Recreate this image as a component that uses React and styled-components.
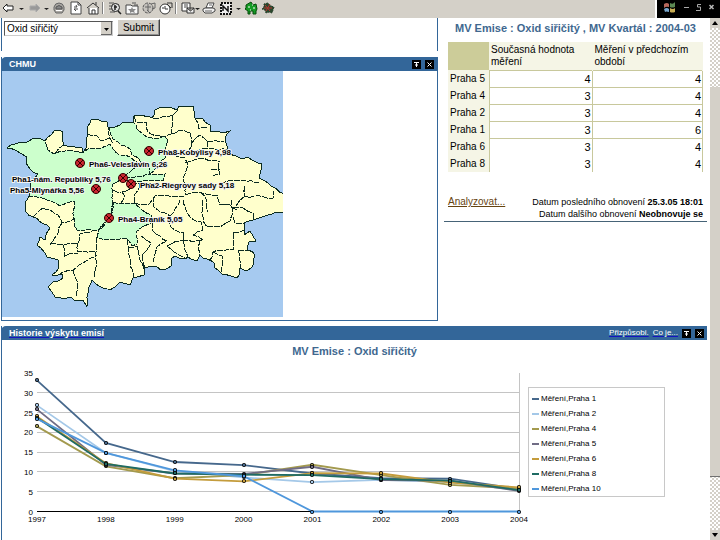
import React from "react";
import styled, { createGlobalStyle } from "styled-components";

const BLUE = "#336699";
const INK = "#0a2a20";

const GlobalStyle = createGlobalStyle`
  * { box-sizing: border-box; }
  html, body { margin: 0; padding: 0; background: #fff; }
  body { font-family: "Liberation Sans", Arial, sans-serif; font-size: 10px; color: #000; overflow: hidden; }
  button { font: inherit; }
`;

const Page = styled.div`
  display: flex;
  flex-direction: column;
  height: 100vh;
`;

const Toolbar = styled.header`
  display: flex;
  flex: none;
  height: 18px;
  background: #d4d0c8;
`;

const Tools = styled.nav`
  display: flex;
  flex: 1;
  align-items: center;
  gap: 1px;
  padding: 0 0 2px 1px;
`;

const ToolButton = styled.button`
  display: flex;
  flex: none;
  padding: 0;
  border: 0;
  background: none;
`;

const Separator = styled.span`
  width: 4px;
  height: 12px;
  border-left: 1px solid #808080;
  box-shadow: inset 1px 0 #fff;
  background: #d4d0c8;
`;

const WindowControls = styled.div`
  display: flex;
  align-items: center;
  justify-content: space-between;
  width: 63px;
  padding: 0 5px 4px 5px;
  background: #000;
  box-shadow: -2px 0 #fff;
`;

const Body = styled.div`
  display: flex;
  flex: 1;
  min-height: 0;
`;

const Main = styled.main`
  display: flex;
  flex: 1;
  flex-direction: column;
  gap: 5px;
  min-width: 0;
  padding: 0 3px 0 1px;
  overflow: hidden;
`;

const Columns = styled.div`
  display: grid;
  grid-template-columns: 437fr 263fr;
  gap: 6px;
  align-items: start;
`;

const Stack = styled.div`
  display: flex;
  flex-direction: column;
  gap: 6px;
`;

const FilterForm = styled.form`
  display: flex;
  gap: 4px;
  height: 33px;
  padding: 1px 2px;
  border: 1px solid ${BLUE};
  border-width: 0 1px;
`;

const Select = styled.select`
  appearance: none;
  width: 109px;
  height: 15px;
  margin-top: 2px;
  padding: 0 2px;
  border: 1px solid;
  border-color: #555 #ccc #ccc #555;
  border-radius: 0;
  background: #fff;
  font: 10px "Liberation Sans", Arial, sans-serif;
  line-height: 12px;
  color: #000;
`;

const SelectWrap = styled.label`
  position: relative;
  height: 17px;
  svg { position: absolute; right: 1px; top: 3px; pointer-events: none; }
`;

const Submit = styled.button`
  width: 43px;
  height: 17px;
  padding: 0;
  border: 1px solid;
  border-color: #fff #404040 #404040 #fff;
  box-shadow: inset -1px -1px #909090;
  background: #d4d0c8;
  font-size: 10px;
  line-height: 12px;
`;

const Panel = styled.section`
  display: flex;
  flex-direction: column;
  flex: ${(p) => (p.$grow ? 1 : "none")};
  border: 0 solid ${BLUE};
  border-width: ${(p) => (p.$grow ? "0 0 0 1px" : "0 1px 1px 1px")};
`;

const PanelHeader = styled.div`
  display: flex;
  align-items: center;
  gap: 4px;
  height: 14px;
  margin-left: -1px;
  padding: 0 3px 0 8px;
  border-top-left-radius: 5px;
  background: ${BLUE};
  color: #fff;
`;

const PanelTitle = styled.h2`
  flex: 1;
  margin: 0;
  font-size: 9px;
  line-height: 12px;
  a { color: #fff; text-decoration-color: #1414c0; }
`;

const HeaderLink = styled.a`
  font-size: 8px;
  line-height: 12px;
  color: #fff;
  text-decoration-color: #1414c0;
`;

const HeaderButton = styled.button`
  display: flex;
  width: 9px;
  height: 9px;
  margin: 0;
  padding: 0;
  border: 0;
  background: #000;
`;

const MapBody = styled.div`
  padding-bottom: 3px;
  svg { display: block; }
`;

const MapLabel = styled.text`
  font: bold 8px "Liberation Sans", Arial, sans-serif;
  fill: #000;
  stroke: #f4f4f4;
  stroke-width: 2px;
  stroke-linejoin: round;
  paint-order: stroke;
`;

const Summary = styled.section`
  padding: 3px 4px 1px;
  border-bottom: 1px solid #466377;
`;

const ChartTitle = styled.h3`
  margin: 0;
  font-size: 11px;
  line-height: 14px;
  text-align: center;
  color: #40688f;
`;

const DataTable = styled.table`
  width: 255px;
  margin-top: 7px;
  border-collapse: collapse;
  font-size: 11px;
  th { font-weight: normal; font-size: 10px; text-align: left; background: #f5f5e6; padding: 0 2px; }
  thead th { height: 28px; line-height: 12px; border-right: 1px solid #f5f5e6; vertical-align: middle; }
  thead th:first-child { width: 41px; background: #cccc99; border-right: 0; }
  thead th:nth-child(2) { width: 103px; }
  tbody tr { height: 17px; }
  tbody th { line-height: 12px; white-space: nowrap; }
  td { padding: 0 1px; border: 1px solid #c8c89c; line-height: 12px; text-align: right; }
  tbody tr:last-child td { border-bottom: 0; border-top: 0; }
  tbody tr:nth-last-child(2) td { border-bottom: 0; }
`;

const HeadText = styled.span`
  display: block;
  max-width: 96px;
`;

const Footer = styled.footer`
  display: flex;
  justify-content: space-between;
  margin-top: 24px;
  font-size: 9px;
  line-height: 12px;
  p { margin: 0; text-align: right; white-space: nowrap; }
  a { font-size: 10px; color: #664411; }
`;

const History = styled.div`
  padding-top: 4px;
`;

const ChartRow = styled.div`
  display: flex;
  align-items: flex-start;
  margin-top: 2px;
  svg { display: block; flex: none; }
`;

const AxisText = styled.text`
  font: 8px "Liberation Sans", Arial, sans-serif;
  fill: #000;
`;

const Legend = styled.ul`
  width: 137px;
  margin: 27px 0 0;
  padding: 3px 3px 0;
  border: 1px solid #c8c8c8;
  list-style: none;
`;

const LegendItem = styled.li`
  display: flex;
  align-items: center;
  gap: 2px;
  height: 15px;
  font-size: 8px;
  line-height: 10px;
  &::before { content: ""; width: 7px; height: 2px; background: ${(p) => p.$color}; }
`;

const Scrollbar = styled.div`
  display: flex;
  flex-direction: column;
  flex: none;
  width: 10px;
  background: repeating-conic-gradient(#d4d0c8 0 25%, #fff 0 50%) 0 0 / 4px 4px;
`;

const ScrollButton = styled.button`
  display: flex;
  flex: none;
  align-items: center;
  justify-content: center;
  height: 10px;
  padding: 0;
  border: 0;
  background: #d4d0c8;
`;

const Track = styled.div`
  display: flex;
  flex: 1;
  flex-direction: column;
  padding: 59px 0 53px;
`;

const Thumb = styled.div`
  flex: 1;
  border-bottom: 1px solid #707070;
  background: #d4d0c8;
`;

const ICONS = {
  back: <path d="M2 8 6 4v2h6v4H6v2Z" fill="#fff" stroke="#222" />,
  forward: <path d="M14 8 10 4v2H4v4h6v2Z" fill="#999" stroke="#aaa" />,
  stop: (
    <>
      <path d="M3 10V7q1-4 5-4t5 4v3l-2 3H5Z" fill="#aaa7a2" stroke="#666" />
      <path d="M5 9V7q3-3 6 0v2Z" fill="#888" stroke="#555" />
      <path d="M5 10.500h6" stroke="#fff" />
    </>
  ),
  refresh: (
    <>
      <path d="M3 2h7l3 3v9H3Z" fill="#fff" stroke="#444" />
      <path d="M6 7h3l-1-2M10 9H6l2 2M10 2v3h3" fill="none" stroke="#444" />
    </>
  ),
  home: (
    <>
      <path d="M4 8v6h9V8" fill="#fff" stroke="#333" />
      <path d="m2 8 6-5 6 5M11 5V2M7 14v-4h3v4" fill="none" stroke="#333" />
    </>
  ),
  search: (
    <>
      <path d="M2 3h5M2 6h3M2 9h3M3 12h5" stroke="#555" />
      <circle cx="8.500" cy="7.500" r="4" fill="#ddd" stroke="#222" />
      <path d="m11 11 3 3M7 7h3M8 5v5" stroke="#222" strokeWidth="1.500" />
    </>
  ),
  favorites: (
    <>
      <path d="M2 5h5l1 1h6v8H2Z" fill="#f8f8f8" stroke="#444" />
      <path d="m8 7 1 2h3l-2 2 1 2-3-1-2 1v-2L4 9h3Z" fill="#888" />
      <path d="M8 3h4M10 5h4" stroke="#555" />
    </>
  ),
  media: (
    <>
      <circle cx="7" cy="8" r="5" fill="#c5c2bd" stroke="#555" strokeDasharray="3 1" />
      <path d="M7 4v7M4 7h6M10 4l4-1v5l-3 1M6 10l3 3" fill="none" stroke="#666" />
    </>
  ),
  history: (
    <>
      <circle cx="7" cy="9" r="5" fill="#fff" stroke="#333" />
      <path d="M7 6v3h3M9 3h5v5M9 4l4 4M4 8h2" fill="none" stroke="#333" />
    </>
  ),
  print: (
    <>
      <path d="m5 8 2-5h6l-2 5Z" fill="#fff" stroke="#444" />
      <path d="m2 9 2-1h8l2 1v2l-3 2H4l-2-2Z" fill="#f0f0f0" stroke="#444" />
      <path d="M4 11h7M8 5h3" stroke="#666" />
    </>
  ),
  edit: (
    <>
      <path d="M3 3h10v11H3Z" fill="#eee" stroke="#111" strokeWidth="2" strokeDasharray="2 1" />
      <path d="M5 11V6l5 5V6" fill="none" stroke="#111" strokeWidth="1.500" />
    </>
  ),
  green: (
    <>
      <path d="M8 2 3 5v3L2 9l3 2v3h2v-3h3v3h3v-3l1-2-1-5-3 1Z" fill="#159b25" stroke="#064d0c" />
      <path d="M5 7h2M9 5h1M10 8h2M7 10h1" stroke="#fff" />
    </>
  ),
  red: (
    <>
      <path d="M8 3 4 4v3L2 9l3 1 1 3 3-1 3 1 1-3 1-3-3-1Z" fill="#2a482d" stroke="#263d29" strokeDasharray="2 1" />
      <path d="m5 5 5 6M10 4 6 11M4 8h8" stroke="#b5342f" />
    </>
  ),
};

function Tool({ name, label }) {
  return (
    <ToolButton type="button" aria-label={label}>
      <svg width="16" height="16" viewBox="0 0 16 16">{ICONS[name]}</svg>
    </ToolButton>
  );
}

function MenuArrow() {
  return (
    <ToolButton type="button" aria-label="Nabídka">
      <svg width="7" height="16"><path d="M1 8h5L3.500 10Z" fill="#222" /></svg>
    </ToolButton>
  );
}

function PanelButtons() {
  return (
    <>
      <HeaderButton type="button" aria-label="Sbalit">
        <svg width="9" height="9"><path d="M2 2.500h5M4.500 3v4M3 5h3" stroke="#fff" /></svg>
      </HeaderButton>
      <HeaderButton type="button" aria-label="Zavřít">
        <svg width="9" height="9"><path d="m2.500 2.500 4 4m0-4-4 4" stroke="#fff" /></svg>
      </HeaderButton>
    </>
  );
}

/* Turns a list of coordinates into a path with small irregular kinks, as on a district border. */
function border(coords, close) {
  const pts = coords.split(" ").map((pair) => pair.split(",").map(Number));
  if (close) pts.push(pts[0]);
  let d = `M${pts[0]}`;
  for (let i = 1; i < pts.length; i += 1) {
    const [x1, y1] = pts[i - 1];
    const [x2, y2] = pts[i];
    const dx = x2 - x1;
    const dy = y2 - y1;
    const length = Math.hypot(dx, dy) || 1;
    const steps = Math.floor(length / 4);
    for (let s = 1; s < steps; s += 1) {
      const t = s / steps;
      const seed = Math.sin((x1 + x2) * 1.7 + (y1 + y2) * 2.3 + Math.min(s, steps - s) * 5.1);
      const off = x1 < 283 || x2 < 283 ? seed * 1.1 : 0;
      d += `L${(x1 + dx * t - (dy / length) * off).toFixed(1)},${(y1 + dy * t + (dx / length) * off).toFixed(1)}`;
    }
    d += `L${x2},${y2}`;
  }
  return close ? `${d}Z` : d;
}

const CITY =
  "7,148 15,144 25,143 32,139 39,138 45,141 51,135 55,130 63,132 62,138 64,145 72,146 82,148 83,152 87,147 88,133 87,127 91,120 97,119 107,122 108,127 115,127 123,122 133,122 134,116 150,117 152,118 155,110 165,107 172,108 177,110 179,106 194,106 195,118 202,118 210,125 210,131 223,133 230,131 225,138 227,146 227,150 225,154 240,158 248,157 262,164 259,178 268,183 284,194 284,212 268,215 253,220 244,223 244,235 250,231 256,241 249,242 248,250 255,255 254,263 248,270 240,268 239,275 237,278 222,274 215,268 214,263 203,258 200,255 197,261 188,257 185,259 175,256 171,259 172,265 161,270 157,267 145,268 144,275 137,277 133,278 130,285 120,282 115,287 107,289 95,283 92,280 87,297 87,307 83,300 75,301 72,298 55,297 48,287 53,282 63,278 62,274 52,275 59,267 58,260 47,257 37,245 40,237 45,240 50,228 33,217 26,212 25,203 29,196 31,188 30,181 38,174 30,169 26,163 27,157 20,153";

const GREEN = [
  "7,148 15,144 25,143 32,139 39,138 45,141 48,150 54,154 65,151 82,153 88,149 97,149 110,144 113,149 120,155 130,157 138,163 148,166 150,174 142,177 122,178 113,184 113,202 112,213 107,220 98,230 87,229 78,231 74,226 74,201 60,206 47,200 29,196 31,188 30,181 38,174 30,169 26,163 27,157 20,153",
  "109,128 115,127 123,122 133,122 137,129 147,137 155,139 165,136 168,141 165,150 166,158 158,164 150,174 165,174 163,181 148,181 122,180 130,172 142,165 139,159 132,155 130,149 121,145 113,139",
  "113,202 121,203 134,203 140,208 151,215 153,222 142,227 136,232 137,244 132,246 127,239 117,240 104,240 97,237 99,230 107,220 112,213",
];

const BORDERS = [
  "64,145 59,148 55,154", "87,134 97,136 101,141 110,138 108,127", "110,138 113,144", "134,116 136,122 146,122 148,132 160,136",
  "153,119 162,117 173,115 178,110", "173,115 171,134", "171,134 179,130 190,133 192,145", "195,118 199,129 208,127",
  "192,143 200,135 207,141 207,149", "207,141 224,142", "168,150 176,156 185,158 187,168 183,178 185,195", "185,163 200,158 220,162",
  "218,163 220,175 211,177", "211,170 220,170", "220,183 243,180 259,182", "245,186 245,196 273,198 273,191", "245,196 236,206",
  "185,195 200,192 217,195 220,205 230,205 237,210", "200,192 207,201 208,212", "192,145 190,153 207,149 227,150",
  "33,217 43,208 58,215 62,223 74,219", "62,223 58,233 50,245", "50,243 63,245 78,243", "78,243 80,234 97,230",
  "78,243 78,252 97,252", "63,245 65,256 78,253", "97,237 96,252 95,277", "58,275 73,270 97,255", "73,270 78,283 77,297",
  "127,239 128,253 133,278", "128,248 137,246 140,260 145,275", "145,268 142,255 151,243 140,235",
  "153,222 153,231 167,241 157,247 153,262", "167,246 187,259", "180,200 170,216 171,227 184,233 183,240 167,246",
  "183,200 190,217 201,222 203,230 193,235 203,240 183,240", "184,234 183,240 188,258", "200,240 200,255",
  "203,200 203,217 207,227 220,227 230,221 233,213 231,200", "233,207 243,208 253,213 253,220", "233,217 235,223 244,224",
  "233,233 233,250 213,252 210,260", "233,233 244,230", "238,250 248,250", "238,250 240,268", "213,252 222,256 221,272",
  "113,190 122,192 132,187 140,183 155,184 165,187 184,184", "121,203 125,196 122,192", "134,203 135,194 140,183",
  "134,203 149,204 155,196 165,195 184,196", "155,196 153,206 160,212 170,216", "160,136 171,134",
];

const STATIONS = [
  { x: 149, y: 151, lx: 158, ly: 155, text: "Pha8-Kobylisy 4,98" },
  { x: 80, y: 163, lx: 89, ly: 167, text: "Pha6-Veleslavín 6,26" },
  { x: 123, y: 178, lx: 12, ly: 182, text: "Pha1-nám. Republiky 5,76" },
  { x: 131, y: 184, lx: 140, ly: 188, text: "Pha2-Riegrovy sady 5,18" },
  { x: 96, y: 189, lx: 10, ly: 193, text: "Pha5-Mlynářka 5,56" },
  { x: 109, y: 218, lx: 118, ly: 222, text: "Pha4-Braník 5,05" },
];

function CityMap() {
  return (
    <svg width="281" height="246" viewBox="2 71 281 246" role="img" aria-label="Mapa měřicích stanic v Praze">
      <rect x="2" y="71" width="281" height="246" fill="#a6caf0" />
      <path d={border(CITY, true)} fill="#ffffcc" />
      {GREEN.map((g) => <path key={g} d={border(g, true)} fill="#ccffcc" />)}
      <g fill="none" stroke={INK} strokeWidth="1" shapeRendering="crispEdges">
        {GREEN.map((g) => <path key={g} d={border(g, true)} strokeDasharray="5 1" />)}
        {BORDERS.map((b) => <path key={b} d={border(b)} strokeDasharray="6 1" />)}
        <path d={border(CITY, true)} />
      </g>
      {STATIONS.map((s) => (
        <g key={s.text}>
          <circle cx={s.x} cy={s.y} r="4.500" fill="#cc2630" stroke="#300" />
          <path d={`M${s.x - 3} ${s.y - 3}l6 6m0-6l-6 6`} stroke="#300" />
        </g>
      ))}
      {STATIONS.map((s) => <MapLabel key={s.text} x={s.lx} y={s.ly}>{s.text}</MapLabel>)}
    </svg>
  );
}

const ROWS = [
  ["Praha 5", 4, 4], ["Praha 4", 3, 4], ["Praha 2", 3, 4],
  ["Praha 1", 3, 6], ["Praha 6", 3, 4], ["Praha 8", 3, 4],
];

const SERIES = [
  { name: "Praha 1", color: "#46688c", values: [33.1, 17.3, 12.5, 11.7, 9.6, 8.4, 8.3, 5.7] },
  { name: "Praha 2", color: "#a4c8e8", values: [26.8, 14.8, 10.2, 8.6, 7.4, 8, 7.4, 5.4] },
  { name: "Praha 4", color: "#a39a4e", values: [21.5, 11.4, 8.4, 9.2, 11.8, 9.2, 6.7, 5.8] },
  { name: "Praha 5", color: "#706c85", values: [25.8, 11.8, 9.6, 9.5, 11.3, 7.9, 7.8, 5.2] },
  { name: "Praha 6", color: "#c49c3c", values: [24, 12.2, 8.3, 7.6, 9.7, 9.6, 7.3, 6.1] },
  { name: "Praha 8", color: "#1f6b63", values: [23.7, 12, 9.6, 9.3, 9.2, 8.2, 7.8, 5.4] },
  { name: "Praha 10", color: "#4f97dc", values: [23.4, 14.8, 10.4, 8.9, 0, 0, 0, 0] },
];

const chartX = (i) => 35 + i * 68.86;
const chartY = (v) => 151.5 - v * 3.96;

function LineChart() {
  return (
    <svg width="526" height="170" viewBox="0 0 526 170" role="img" aria-label="Historie výskytu emisí">
      {[5, 10, 15, 20, 25, 30].map((v) => (
        <path key={v} d={`M35 ${Math.floor(chartY(v)) + 0.5}H517`} stroke="#c4c4c4" />
      ))}
      <path d="M517.500 13V151" stroke="#c4c4c4" />
      <path d="M35 151.500H517" stroke="#000" />
      {SERIES.map((s) => (
        <polyline
          key={s.name}
          points={s.values.map((v, i) => `${chartX(i)},${chartY(v)}`).join(" ")}
          fill="none"
          stroke={s.color}
          strokeWidth="1.800"
        />
      ))}
      {SERIES.map((s) => s.values.map((v, i) => (
        <rect
          key={s.name + i}
          x={Math.round(chartX(i)) - 1.5}
          y={Math.round(chartY(v)) - 1.5}
          width="3"
          height="3"
          rx="1"
          fill={s.color}
          stroke="#000"
        />
      )))}
      {[0, 5, 10, 15, 20, 25, 30, 35].map((v) => (
        <AxisText key={v} x="31" y={chartY(v) + 3} textAnchor="end">{v}</AxisText>
      ))}
      {[1997, 1998, 1999, 2000, 2001, 2002, 2003, 2004].map((year, i) => (
        <AxisText key={year} x={chartX(i)} y="162" textAnchor="middle">{year}</AxisText>
      ))}
    </svg>
  );
}

export default function App() {
  return (
    <Page>
      <GlobalStyle />
      <Toolbar>
        <Tools aria-label="Panel nástrojů">
          <Tool name="back" label="Zpět" />
          <MenuArrow />
          <Tool name="forward" label="Vpřed" />
          <MenuArrow />
          <Tool name="stop" label="Zastavit" />
          <Tool name="refresh" label="Aktualizovat" />
          <Tool name="home" label="Domů" />
          <Separator />
          <Tool name="search" label="Hledat" />
          <Tool name="favorites" label="Oblíbené" />
          <Tool name="media" label="Média" />
          <Tool name="history" label="Historie" />
          <Separator />
          <ToolButton type="button" aria-label="Pošta">
            <svg width="20" height="16">
              <path d="M2 3h8v8H2Z" fill="#fff" stroke="#333" />
              <path d="M4 5h4M4 7h4" stroke="#444" />
              <path d="M7 8h7v5H7Zl3.500 3L14 8" fill="#eee" stroke="#333" />
              <path d="M15 8h5l-2.500 2Z" fill="#222" />
            </svg>
          </ToolButton>
          <Tool name="print" label="Tisk" />
          <Tool name="edit" label="Upravit" />
          <MenuArrow />
          <Tool name="green" label="Překlad" />
          <Tool name="red" label="Slovník" />
        </Tools>
        <WindowControls>
          <svg width="15" height="14" aria-hidden="true">
            <path d="M2 4q3-2 5 0v3q-3-1-5 1Z" fill="#b7685c" />
            <path d="M8 3q3 2 5-1v5q-3 1-5 0Z" fill="#5c8953" />
            <path d="M2 9q3-2 5 0v3q-3-1-4 0Z" fill="#7aa8cf" />
            <path d="M8 8q3 2 5 0v4q-3 1-5 0Z" fill="#c8ad54" />
          </svg>
          <ToolButton type="button" aria-label="Minimalizovat">
            <svg width="7" height="9"><path d="M1 4.500h5" stroke="#aaa" /></svg>
          </ToolButton>
          <ToolButton type="button" aria-label="Obnovit">
            <svg width="7" height="9"><path d="M6 1.500H2.500V4h3v3.500H1" fill="none" stroke="#aaa" /></svg>
          </ToolButton>
          <ToolButton type="button" aria-label="Zavřít okno">
            <svg width="7" height="9"><path d="m1.500 2 4 4m0-4-4 4" stroke="#bbb" strokeWidth="1.500" /></svg>
          </ToolButton>
        </WindowControls>
      </Toolbar>
      <Body>
        <Main>
          <Columns>
            <Stack>
              <FilterForm onSubmit={(e) => e.preventDefault()}>
                <SelectWrap>
                  <Select aria-label="Emise" defaultValue="so2">
                    <option value="so2">Oxid siřičitý</option>
                  </Select>
                  <svg width="11" height="13">
                    <rect width="11" height="13" fill="#d4d0c8" />
                    <path d="M0 12.500h10.500V0" fill="none" stroke="#666" />
                    <path d="M3 6h5L5.500 9Z" />
                  </svg>
                </SelectWrap>
                <Submit type="submit">Submit</Submit>
              </FilterForm>
              <Panel>
                <PanelHeader>
                  <PanelTitle>CHMU</PanelTitle>
                  <PanelButtons />
                </PanelHeader>
                <MapBody><CityMap /></MapBody>
              </Panel>
            </Stack>
            <Summary>
              <ChartTitle>MV Emise : Oxid siřičitý , MV Kvartál : 2004-03</ChartTitle>
              <DataTable>
                <thead>
                  <tr>
                    <th aria-label="Oblast" />
                    <th scope="col"><HeadText>Současná hodnota měření</HeadText></th>
                    <th scope="col"><HeadText>Měření v předchozím období</HeadText></th>
                  </tr>
                </thead>
                <tbody>
                  {ROWS.map(([name, now, before]) => (
                    <tr key={name}>
                      <th scope="row">{name}</th>
                      <td>{now}</td>
                      <td>{before}</td>
                    </tr>
                  ))}
                </tbody>
              </DataTable>
              <Footer>
                <a href="#analyza">Analyzovat...</a>
                <div>
                  <p>Datum posledního obnovení <b>25.3.05 18:01</b></p>
                  <p>Datum dalšího obnovení <b>Neobnovuje se</b></p>
                </div>
              </Footer>
            </Summary>
          </Columns>
          <Panel $grow>
            <PanelHeader>
              <PanelTitle><a href="#historie">Historie výskytu emisí</a></PanelTitle>
              <HeaderLink href="#prizpusobit">Přizpůsobi.</HeaderLink>
              <HeaderLink href="#coje">Co je...</HeaderLink>
              <PanelButtons />
            </PanelHeader>
            <History>
              <ChartTitle>MV Emise : Oxid siřičitý</ChartTitle>
              <ChartRow>
                <LineChart />
                <Legend>
                  {SERIES.map((s) => (
                    <LegendItem key={s.name} $color={s.color}>Měření,{s.name}</LegendItem>
                  ))}
                </Legend>
              </ChartRow>
            </History>
          </Panel>
        </Main>
        <Scrollbar>
          <ScrollButton type="button" aria-label="Nahoru">
            <svg width="6" height="4"><path d="M0 4h6L3 0Z" /></svg>
          </ScrollButton>
          <Track><Thumb /></Track>
          <ScrollButton type="button" aria-label="Dolů">
            <svg width="6" height="4"><path d="M0 0h6L3 4Z" /></svg>
          </ScrollButton>
        </Scrollbar>
      </Body>
    </Page>
  );
}
